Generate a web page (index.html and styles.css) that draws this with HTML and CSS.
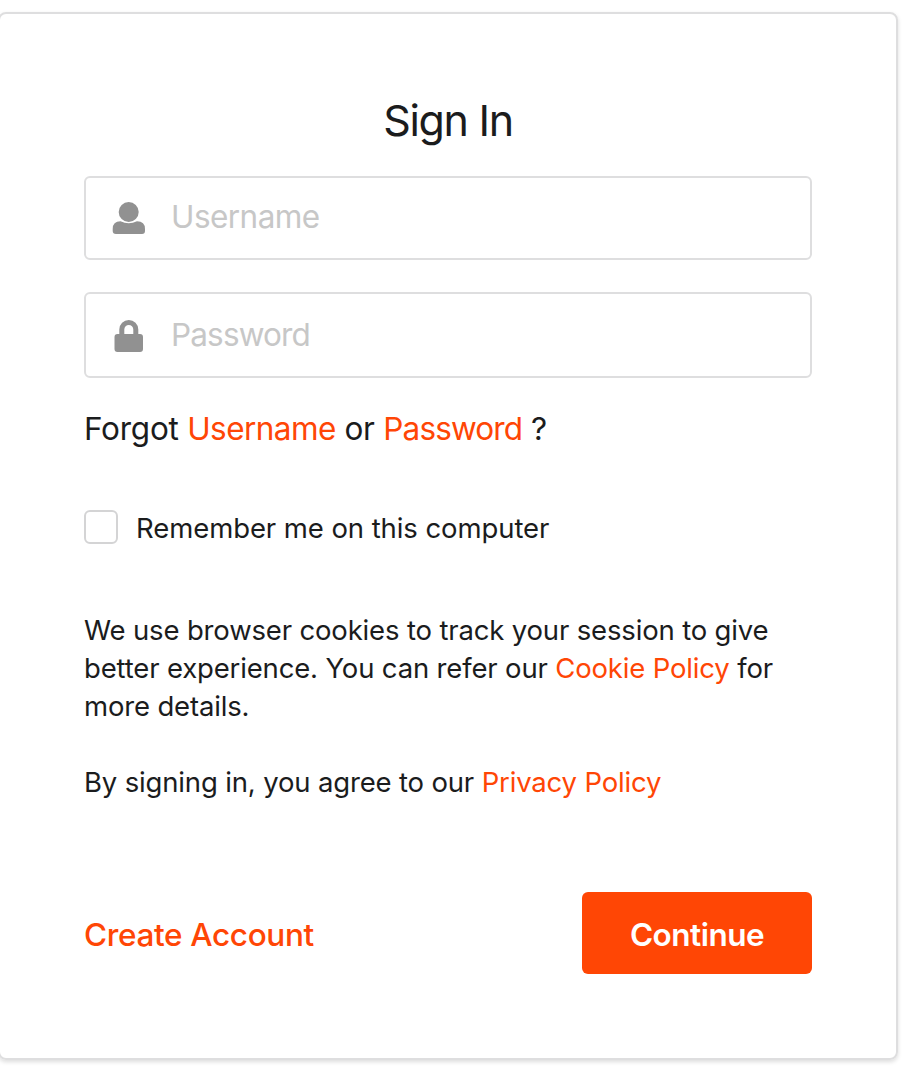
FILE: index.html
```html
<!DOCTYPE html>
<html lang="en">
<head>
<meta charset="utf-8">
<title>Sign In</title>
<link rel="stylesheet" href="styles.css">
</head>
<body>
<main class="card">
  <h1 class="title">Sign In</h1>
  <form class="form">
    <label class="field">
      <svg class="icon" viewBox="0 0 34 34"><circle cx="16.700" cy="11" r="10"/><path d="M8.500 20.200Q16.700 24.500 25 20.200Q33 20.200 33 28V30Q33 33 30 33H4Q.7 33 .7 30V28Q.7 20.200 8.500 20.200Z"/></svg>
      <span class="placeholder">Username</span>
    </label>
    <label class="field field-password">
      <svg class="icon" viewBox="0 0 34 34"><path fill-rule="evenodd" d="M7.300 15V10.500A9.500 9.500 0 0 1 26.300 10.500V15H28Q31 15 31 18V30Q31 33 28 33H5.500Q2.500 33 2.500 30V18Q2.500 15 5.500 15ZM12.300 15H21.300V10.500A4.500 4.500 0 0 0 12.300 10.500Z"/></svg>
      <span class="placeholder placeholder-password">Password</span>
    </label>
    <p class="forgot">Forgot <a class="username-link">Username</a> or <a class="password-link">Password</a> ?</p>
    <label class="remember"><span class="checkbox"></span><span>Remember me on this computer</span></label>
    <p class="notice">We use browser cookies to track your session to give<br>better experience. You can refer our <a>Cookie Policy</a> for<br>more details.</p>
    <p class="notice agree">By signing in, you agree to our <a>Privacy Policy</a></p>
    <div class="actions"><a class="create">Create Account</a><button class="continue" type="button">Continue</button></div>
  </form>
</main>
</body>
</html>
```

FILE: styles.css
```css
* { box-sizing: border-box; }
body { margin: 0; height: 1068px; padding-top: 12px; overflow: hidden; background: #fff; color: #1b1c1d; font-family: Inter, "Liberation Sans", sans-serif; }
.card { width: 900px; height: 1048px; margin-left: -2px; padding: 77px 84px 0; border: 2px solid #dededf; border-radius: 8px; box-shadow: 0 2px 4px #ddd; }
.title { margin: 0; height: 85px; line-height: 58px; text-align: center; font-size: 43px; font-weight: 400; letter-spacing: -1.3px; }
.form { width: 728px; }
.field { display: flex; align-items: center; height: 84px; padding-left: 26px; border: 2px solid #dededf; border-radius: 6px; color: #c7c7c7; font-size: 31.5px; letter-spacing: -.55px; }
.field-password { margin-top: 32px; height: 86px; }
.icon { width: 34px; height: 34px; margin-right: 25px; fill: #919191; }
.field-password .icon { margin-top: 2px; }
.placeholder { padding-bottom: 4px; }
.placeholder-password { padding-bottom: 2px; letter-spacing: -.85px; }
p { margin: 0; white-space: nowrap; }
a { color: #ff4605; }
.forgot { margin-top: 30px; line-height: 42px; font-size: 31.5px; letter-spacing: -.25px; }
.username-link { letter-spacing: -.55px; }
.password-link { letter-spacing: -.85px; }
.remember { display: flex; align-items: center; height: 36px; margin-top: 59px; font-size: 27.5px; letter-spacing: -.08px; }
.remember span:last-child { padding-top: 1px; }
.checkbox { width: 34px; height: 34px; margin-right: 18px; border: 2px solid #d4d4d5; border-radius: 6px; }
.notice { margin-top: 66px; font-size: 27.5px; line-height: 38px; letter-spacing: -.16px; }
.agree { margin-top: 38px; }
.actions { display: flex; justify-content: space-between; align-items: center; height: 82px; margin-top: 91px; }
.create { padding-top: 3px; font-size: 31.5px; font-weight: 500; letter-spacing: -.35px; }
.continue { width: 230px; height: 82px; padding: 3px 0 0; border: 0; border-radius: 6px; background: #ff4605; color: #fff; font: 600 31.5px Inter, "Liberation Sans", sans-serif; letter-spacing: -.5px; }
```
